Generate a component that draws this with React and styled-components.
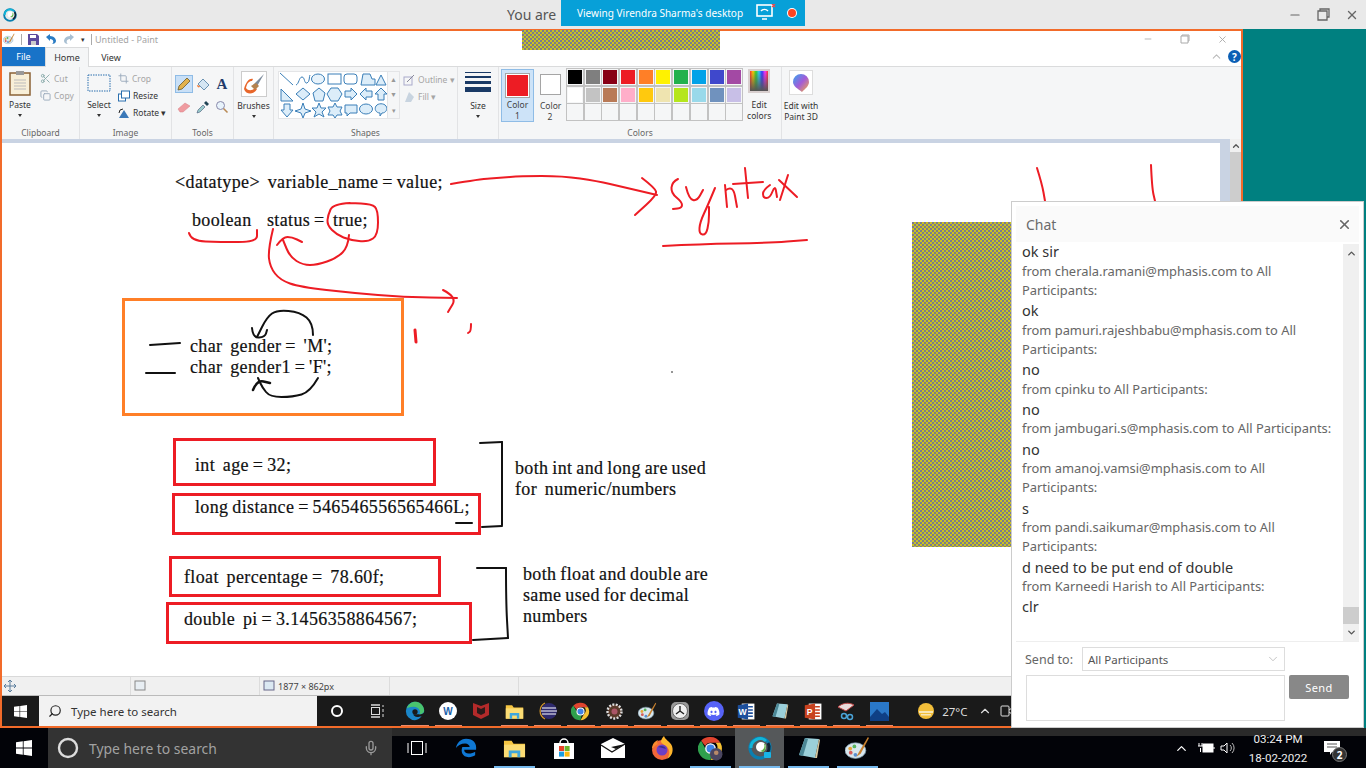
import React from "react";
import styled, { createGlobalStyle } from "styled-components";
import { Scissors, Copy, Crop, Search, Mic, X, ChevronUp, ChevronDown, Minus } from "lucide-react";
import { FaDiscord } from "react-icons/fa";

const GlobalStyle = createGlobalStyle`
  html, body { margin: 0; padding: 0; background: #fff; }
  * { box-sizing: border-box; }
`;

const UI_FONT = `"Noto Sans", "Open Sans", sans-serif`;
const HATCH = `repeating-conic-gradient(#c8c220 0 25%, #7b7b8c 0 50%) 0 0 / 4px 4px`;

const Screen = styled.div`
  position: relative;
  width: 1366px;
  height: 768px;
  overflow: hidden;
  display: flex;
  flex-direction: column;
  font-family: ${UI_FONT};
`;

/* ---------- meeting client top bar ---------- */
const TopBar = styled.div`
  height: 29px;
  background: #e9e9e9;
  display: flex;
  align-items: center;
  padding-left: 3px;
  flex: none;
`;
const YouAre = styled.span`
  margin-left: 490px;
  font-size: 14px;
  color: #555;
`;
const ClientControls = styled.div`
  margin-left: auto;
  display: flex;
  align-items: center;
  gap: 15px;
  padding-right: 7px;
  color: #666;
`;
const SharePill = styled.div`
  position: absolute;
  left: 561px;
  top: 0;
  width: 244px;
  height: 26px;
  background: #07a0d8;
  color: #fff;
  font-size: 10.05px;
  white-space: nowrap;
  display: flex;
  align-items: center;
  padding-left: 16px;
  z-index: 5;
`;
const RecDot = styled.i`
  width: 8px;
  height: 8px;
  border-radius: 50%;
  background: #ff4422;
  box-shadow: 0 0 0 1px #fff;
  margin-left: 12px;
  flex: none;
`;
const TopHatch = styled.div`
  position: absolute;
  left: 522px;
  top: 30px;
  width: 198px;
  height: 20px;
  z-index: 4;
  background: ${HATCH};
`;

/* ---------- remote desktop ---------- */
const Middle = styled.div`
  display: flex;
  height: 699px;
  flex: none;
  background: #008080;
`;
const PaintWindow = styled.div`
  width: 1243px;
  height: 699px;
  border: 2px solid #f26b2a;
  display: flex;
  flex-direction: column;
  background: #fff;
`;
const TitleRow = styled.div`
  height: 16px;
  display: flex;
  align-items: center;
  flex: none;
  padding-left: 1px;
  gap: 6px;
`;
const QatSep = styled.i`
  width: 1px;
  height: 11px;
  background: #aaa;
`;
const DocTitle = styled.span`
  font-size: 9px;
  color: #a4a4a4;
  margin-left: -3px;
`;
const WinControls = styled.div`
  margin-left: auto;
  display: flex;
  align-items: center;
  gap: 27px;
  padding-right: 13px;
  color: #aaa;
`;
const TabRow = styled.div`
  height: 20px;
  display: flex;
  flex: none;
  border-bottom: 1px solid #dadbdc;
  position: relative;
`;
const FileTab = styled.div`
  width: 43px;
  background: #1873c8;
  color: #fff;
  font-size: 9px;
  display: flex;
  align-items: center;
  justify-content: center;
`;
const RibbonTab = styled.div`
  width: 44px;
  font-size: 9px;
  color: #333;
  display: flex;
  align-items: center;
  justify-content: center;
  height: ${(p) => (p.$active ? "20px" : "19px")};
  background: ${(p) => (p.$active ? "#f5f6f7" : "#fff")};
  border: 1px solid ${(p) => (p.$active ? "#dadbdc" : "transparent")};
  border-bottom: none;
  z-index: 1;
`;
const TabEnd = styled.div`
  margin-left: auto;
  display: flex;
  align-items: center;
  gap: 5px;
  color: #bbb;
`;
const HelpDot = styled.span`
  width: 13px;
  height: 13px;
  border-radius: 50%;
  background: #0b5fb5;
  color: #fff;
  font-size: 10px;
  font-weight: 700;
  display: flex;
  align-items: center;
  justify-content: center;
`;

const Ribbon = styled.div`
  height: 72px;
  flex: none;
  display: flex;
  background: #f5f6f7;
`;
const Group = styled.div`
  width: ${(p) => p.$w}px;
  display: flex;
  flex-direction: column;
  border-right: 1px solid #e2e3e5;
  ${(p) => p.$none && "border-right: none;"}
`;
const GroupBody = styled.div`
  flex: 1;
  display: flex;
  gap: ${(p) => p.$gap || 0}px;
  padding: ${(p) => p.$pad || "3px 0 0 0"};
`;
const GroupLabel = styled.div`
  height: 13px;
  font-size: 8.5px;
  line-height: 13px;
  text-align: center;
  color: #666;
`;
const BigTool = styled.div`
  width: ${(p) => p.$w}px;
  display: flex;
  flex-direction: column;
  align-items: center;
  font-size: 8.5px;
  line-height: 11px;
  color: #333;
  text-align: center;
  white-space: nowrap;
  flex: none;
`;
const Caret = styled.i`
  display: block;
  width: 0;
  height: 0;
  margin: 4px auto 0;
  border: 2.5px solid transparent;
  border-top: 3px solid #333;
  border-bottom: none;
`;
const SmallTools = styled.div`
  display: flex;
  flex-direction: column;
  margin-left: ${(p) => p.$ml || 0}px;
`;
const SmallTool = styled.div`
  height: 17px;
  display: flex;
  align-items: center;
  gap: 3px;
  font-size: 8.5px;
  color: ${(p) => (p.$off ? "#a5a5a5" : "#333")};
`;
const ToolGrid = styled.div`
  display: grid;
  grid-template-columns: repeat(3, 18px);
  grid-auto-rows: 18px;
  gap: 5px 1px;
  margin-left: 3px;
  margin-top: 8px;
`;
const Spacer = styled.div`
  flex: 1;
`;
const ToolCell = styled.div`
  display: flex;
  align-items: center;
  justify-content: center;
  background: ${(p) => (p.$active ? "#c9e0f7" : "transparent")};
  outline: ${(p) => (p.$active ? "1px solid #8fbce6" : "none")};
  outline-offset: -1px;
`;
const ToolLetter = styled.span`
  font-family: "Liberation Serif", serif;
  font-weight: 700;
  font-size: 15px;
  color: #223a6a;
`;
const Gallery = styled.div`
  width: 110px;
  height: 48px;
  background: #fff;
  border: 1px solid #e4e5e7;
  flex: none;
`;
const GalleryArrows = styled.div`
  width: 12px;
  height: 48px;
  border: 1px solid #e4e5e7;
  border-left: none;
  display: flex;
  flex-direction: column;
  justify-content: space-around;
  align-items: center;
  color: #999;
  font-size: 7px;
  line-height: 1;
  flex: none;
`;
const SizeLines = styled.div`
  width: 26px;
  display: flex;
  flex-direction: column;
  gap: 3px;
  margin: 2px 0 8px;
`;
const SizeLine = styled.i`
  display: block;
  height: ${(p) => p.$h}px;
  background: #1a3a66;
`;
const ColorPick = styled.div`
  width: ${(p) => (p.$active ? 33 : 22)}px;
  height: 53px;
  padding-top: ${(p) => (p.$active ? 4 : 5)}px;
  background: ${(p) => (p.$active ? "#cde3f8" : "transparent")};
  border: 1px solid ${(p) => (p.$active ? "#8fbce6" : "transparent")};
  font-size: 8.5px;
  line-height: 11px;
  color: #444;
  text-align: center;
  flex: none;
`;
const ColorChip = styled.div`
  width: ${(p) => p.$s}px;
  height: ${(p) => p.$s}px;
  margin: 0 auto ${(p) => p.$mb}px;
  background: ${(p) => p.$c};
  border: 1px solid #fff;
  outline: 1px solid #a5a5a5;
`;
const Palette = styled.div`
  display: grid;
  grid-template-columns: repeat(10, 16px);
  grid-auto-rows: 16px;
  gap: 1.5px 1.7px;
  margin: 0 -2px 0 1px;
  flex: none;
`;
const Swatch = styled.div`
  background: ${(p) => p.$c};
  border: 1px solid #f5f6f7;
  outline: 1px solid #c2c2c2;
  outline-offset: 0;
`;
const Rainbow = styled.div`
  width: 22px;
  height: 24px;
  margin-bottom: 6px;
  border: 2px solid #d8cfcf;
  background: linear-gradient(#0000, #555), linear-gradient(90deg, #f33, #fc0, #3c3, #3cf, #33f, #f3f, #f33);
`;
const Ball3d = styled.div`
  width: 24px;
  height: 25px;
  margin-bottom: 5px;
  background: #fff;
  border: 1px solid #ddd;
  display: flex;
  align-items: center;
  justify-content: center;
`;

/* canvas */
const CanvasRow = styled.div`
  flex: 1;
  display: flex;
  min-height: 0;
  background: #c9d3e3;
`;
const CanvasWrap = styled.div`
  flex: 1;
  padding: 4px 10px 0 0;
  min-width: 0;
`;
const Canvas = styled.div`
  position: relative;
  height: 100%;
  background: #fff;
  font-family: "Liberation Serif", serif;
  color: #111;
`;
const VScroll = styled.div`
  width: 11px;
  background: #cdcdcd;
  display: flex;
  flex-direction: column;
`;
const VArrow = styled.div`
  height: 13px;
  background: #f0f0f0;
  color: #555;
  display: flex;
  align-items: center;
  justify-content: center;
`;
const Ink = styled.svg`
  position: absolute;
  left: 0;
  top: 0;
  pointer-events: none;
`;
const CanvasText = styled.div`
  position: absolute;
  left: ${(p) => p.$x - 2}px;
  top: ${(p) => p.$y - 143}px;
  transform: translateY(-50%);
  white-space: pre;
  font-size: 18px;
  letter-spacing: 0.37px;
  word-spacing: -1px;
  -webkit-text-stroke: 0.2px #111;
`;
const Frame = styled.div`
  position: absolute;
  left: ${(p) => p.$x - 2}px;
  top: ${(p) => p.$y - 143}px;
  width: ${(p) => p.$w}px;
  height: ${(p) => p.$h}px;
  border: 3px solid ${(p) => p.$c};
`;
const Hatch = styled.div`
  position: absolute;
  left: 910px;
  top: 79px;
  width: 110px;
  height: 325px;
  background: ${HATCH};
`;

/* status bar */
const StatusBar = styled.div`
  height: 20px;
  flex: none;
  display: flex;
  background: #f0f0f0;
  border-top: 1px solid #d9d9d9;
  border-bottom: 1px solid #bbb;
`;
const StatusCell = styled.div`
  width: ${(p) => p.$w}px;
  border-right: 1px solid #dcdcdc;
  display: flex;
  align-items: center;
  gap: 3px;
  padding-left: ${(p) => p.$pl || 2}px;
  font-size: 9px;
  color: #444;
`;

/* inner taskbar */
const InnerBar = styled.div`
  height: 30px;
  flex: none;
  display: flex;
  align-items: center;
  background: #1a1a1a;
`;
const InnerStart = styled.div`
  width: 37px;
  display: flex;
  justify-content: center;
`;
const InnerSearch = styled.div`
  width: 278px;
  height: 30px;
  background: #f2f2f2;
  color: #333;
  font-size: 11.5px;
  display: flex;
  align-items: center;
  gap: 9px;
  padding-left: 9px;
`;
const FlipSearch = styled(Search)`
  transform: scaleX(-1);
`;
const InnerSlot = styled.div`
  width: ${(p) => p.$w || 33.2}px;
  margin-left: ${(p) => p.$ml || 0}px;
  height: 30px;
  flex: none;
  display: flex;
  align-items: center;
  justify-content: center;
  color: #fff;
  position: relative;
  ${(p) =>
    p.$run &&
    `&::after { content: ""; position: absolute; left: 3px; right: 3px; bottom: 0; height: 1px; background: #f08a68; }`}
`;
const DiscordGlyph = styled(FaDiscord)`
  position: absolute;
`;
const InnerTemp = styled.span`
  font-size: 11.5px;
  color: #ddd;
  margin-left: -7px;
  width: 36px;
  flex: none;
`;
const Teal = styled.div`
  flex: 1;
  background: #008080;
`;

/* outer taskbar */
const OuterBar = styled.div`
  flex: 1;
  display: flex;
  align-items: stretch;
  background: linear-gradient(#2a2a2a 8px, #020308 8px);
  color: #fff;
`;
const OuterStart = styled.div`
  width: 48px;
  background: #020308;
  display: flex;
  align-items: center;
  justify-content: center;
`;
const OuterSearch = styled.div`
  width: 344px;
  background: #333;
  display: flex;
  align-items: center;
  padding: 0 13px 0 9px;
  gap: 10px;
  font-size: 13.9px;
  color: #a2a2a2;
`;
const MicIcon = styled(Mic)`
  margin-left: auto;
`;
const OuterSlot = styled.div`
  width: 49px;
  display: flex;
  align-items: center;
  justify-content: center;
  position: relative;
  background: ${(p) => (p.$active ? "#55585a" : "transparent")};
  ${(p) =>
    p.$run &&
    `&::after { content: ""; position: absolute; left: 4px; right: 4px; bottom: 0; height: 2px; background: #76b9ed; }`}
`;
const Tray = styled.div`
  margin-left: auto;
  display: flex;
  align-items: center;
  padding-right: 5px;
`;
const TrayIcon = styled.div`
  width: 21px;
  margin-left: ${(p) => p.$ml || 0}px;
  display: flex;
  justify-content: center;
  color: #fff;
`;
const Clock = styled.div`
  width: 78px;
  margin-right: 1px;
  padding: 2px 0 0 2px;
  text-align: center;
  font-family: Roboto, sans-serif;
  font-size: 11.6px;
  line-height: 19px;
  color: #eee;
`;
const Notify = styled.div`
  position: relative;
  width: 30px;
  height: 30px;
  display: flex;
  align-items: center;
  justify-content: center;
  margin-right: 14px;
`;
const NotifyBadge = styled.span`
  position: absolute;
  right: 0;
  bottom: 1px;
  width: 15px;
  height: 15px;
  border-radius: 50%;
  background: #333;
  border: 1px solid #777;
  font-size: 10px;
  font-weight: 700;
  color: #fff;
  display: flex;
  align-items: center;
  justify-content: center;
`;

/* chat */
const ChatPanel = styled.div`
  position: absolute;
  left: 1011px;
  top: 201px;
  width: 353px;
  height: 527px;
  z-index: 6;
  background: #fff;
  border: 1px solid #ccc;
  padding: 4px;
  display: flex;
  flex-direction: column;
`;
const ChatHead = styled.div`
  height: 36px;
  flex: none;
  background: #fafafa;
  display: flex;
  align-items: center;
  justify-content: space-between;
  padding: 0 7px 0 10px;
  font-size: 14px;
  color: #6b6b6b;
`;
const ChatBody = styled.div`
  height: 400px;
  flex: none;
  display: flex;
  padding-left: 6px;
  border-bottom: 1px solid #eee;
`;
const ChatList = styled.div`
  flex: 1;
  margin-top: -0.6px;
  padding-right: 6px;
  min-width: 0;
`;
const ChatMsg = styled.div`
  font-size: 14.5px;
  line-height: 20.2px;
  color: #333;
`;
const ChatFrom = styled.div`
  font-size: 12.9px;
  line-height: 19.4px;
  color: #666;
`;
const ChatScroll = styled.div`
  width: 16px;
  flex: none;
  margin-top: 2px;
  background: #f0f0f0;
  display: flex;
  flex-direction: column;
  align-items: center;
  justify-content: space-between;
  color: #555;
  padding: 4px 0 3px;
  position: relative;
`;
const ChatThumb = styled.i`
  position: absolute;
  left: 0;
  right: 0;
  top: 363px;
  height: 17px;
  background: #cdcdcd;
`;
const SendRow = styled.div`
  display: flex;
  align-items: center;
  padding: 5px 0 0 9px;
  font-size: 12.5px;
  color: #666;
`;
const SendTo = styled.span`
  width: 57px;
`;
const SelectBox = styled.div`
  width: 203px;
  height: 24px;
  border: 1px solid #ddd;
  display: flex;
  align-items: center;
  justify-content: space-between;
  padding: 0 4px 0 5px;
  font-size: 11.5px;
  color: #555;
`;
const ComposeRow = styled.div`
  display: flex;
  align-items: flex-start;
  gap: 4px;
  padding: 4px 0 0 10px;
`;
const Compose = styled.div`
  width: 259px;
  height: 46px;
  border: 1px solid #ddd;
`;
const SendButton = styled.div`
  width: 60px;
  height: 24px;
  background: #888;
  border-radius: 2px;
  color: #fff;
  font-size: 11px;
  letter-spacing: 0.4px;
  display: flex;
  align-items: center;
  justify-content: center;
`;
const PillIcon = styled.span`
  margin-left: 13px;
  display: flex;
  align-items: center;
  flex: none;
`;
const ToolCaption = styled.span`
  margin-top: 3px;
`;
const QatCaret = styled.span`
  font-size: 7px;
  color: #333;
`;

/* ---------- small drawings ---------- */
const WinLogo = ({ s, c = "#fff" }) => (
  <svg width={s} height={s} viewBox="0 0 16 16" fill={c}>
    <path d="M0 2.3 6.8 1.3V7.6H0ZM7.6 1.2 16 0V7.6H7.6ZM0 8.4H6.8V14.7L0 13.7ZM7.6 8.4H16V16L7.6 14.8Z" />
  </svg>
);
const WebexRing = ({ s, badge }) => (
  <svg width={s} height={s} viewBox="0 0 24 24">
    <circle cx="12" cy="12" r="10" fill="none" stroke="#0a7fb0" strokeWidth="3.2" />
    <path d="M3 12a9 9 0 0 1 15-7" fill="none" stroke="#12b5d8" strokeWidth="3" />
    <path d="M20 7a9 9 0 0 1-3 12" fill="none" stroke="#123" strokeWidth="3" />
    <circle cx="13" cy="11" r="5" fill="#fff" />
    <path d="M17 8a6 6 0 0 1-2 8l-3-1a5 5 0 0 0 4-7z" fill="#5fb544" />
    {badge && <rect x="16" y="16" width="7" height="6" rx="1" fill="#19b5e6" />}
  </svg>
);
const Folder = ({ s }) => (
  <svg width={s} height={s} viewBox="0 0 24 24">
    <path d="M1 4h8l2 3h12v14H1z" fill="#f5c542" />
    <path d="M1 8h22v13H1z" fill="#fbdc74" />
    <path d="M6 14h12v7h-3v-4H9v4H6z" fill="#3fa6dc" />
  </svg>
);
const ChromeLogo = ({ s, extra }) => (
  <svg width={s} height={s} viewBox="0 0 24 24">
    <path d="M12 1a11 11 0 0 1 9.5 5.5H12a5.5 5.5 0 0 0-5 3L3 4.5A11 11 0 0 1 12 1z" fill="#e0442f" />
    <path d="M21.5 6.5A11 11 0 0 1 12 23l4.7-8.1a5.5 5.5 0 0 0 .2-8.4z" fill="#f6c232" />
    <path d="M12 23A11 11 0 0 1 3 4.5l4.7 8.6a5.5 5.5 0 0 0 5.6 3.7z" fill="#2fa04d" />
    <circle cx="12" cy="12" r="4.5" fill="#3f83e8" stroke="#fff" strokeWidth="1.3" />
    {extra && <circle cx="17.5" cy="17.5" r="6" fill="#4a4660" />}
    {extra && <circle cx="17.5" cy="16" r="2.2" fill="#b98a68" />}
  </svg>
);
const EdgeLogo = ({ s }) => (
  <svg width={s} height={s} viewBox="0 0 24 24">
    <path d="M12 1a11 11 0 0 1 11 11c0 3-3 4-6 4H10c0 2 3 4 7 3 1 0 2-.5 3-1-2 3-5 5-8 5A11 11 0 0 1 1 12 11 11 0 0 1 12 1z" fill="#1a86c9" />
    <path d="M2 9c2-5 6-8 10-8 5 0 10 3 11 10 0 3-3 5-6 5 2-2 1-6-2-8-4-2-10-1-13 1z" fill="#49c46e" />
    <circle cx="12" cy="13" r="3.2" fill="#1a1a1a" />
  </svg>
);
const OuterEdge = ({ s }) => (
  <svg width={s} height={s} viewBox="0 0 24 24">
    <path d="M12 2C6 2 2 7 1 12c2-3 6-5 10-5 3 0 5 2 5 4H8c-2 5 0 11 7 11 3 0 5-1 7-2v-4c-2 1-4 2-7 2-3 0-5-1-5-4h13c1-7-3-12-11-12z" fill="#0f78d4" />
  </svg>
);
const PaintLogo = ({ s }) => (
  <svg width={s} height={s} viewBox="0 0 24 24">
    <ellipse cx="10" cy="14" rx="10" ry="7.5" fill="#d7e6ee" stroke="#7c9aac" strokeWidth=".7" />
    <circle cx="5" cy="12" r="1.8" fill="#e7a53a" />
    <circle cx="9" cy="10" r="1.8" fill="#58b560" />
    <circle cx="5.5" cy="16" r="1.8" fill="#d65b5b" />
    <circle cx="10" cy="18" r="1.8" fill="#5a8ed0" />
    <path d="M22 1 13 16l-2 4 4-3L23 2z" fill="#c8812f" />
  </svg>
);
const NotepadLogo = ({ s }) => (
  <svg width={s} height={s} viewBox="0 0 24 24">
    <path d="M8 2 22 3 18 22 2 19z" fill="#9bd0da" />
    <path d="M8 2 2 19l4 1L11 3z" fill="#4b8796" />
    <path d="M22 3 18 22l2 0 3-18z" fill="#d9c9a0" />
  </svg>
);
const FirefoxLogo = ({ s }) => (
  <svg width={s} height={s} viewBox="0 0 24 24">
    <circle cx="12" cy="14" r="10" fill="#f3673a" />
    <path d="M14 0c1 4 6 5 8 10 2 6-1 11-5 13 3-4 3-9 0-12-2-2-5-3-6-5 0-2 1-4 3-6z" fill="#fdb52c" />
    <path d="M2 13C2 8 5 5 8 4c-1 2-1 3 0 4-3 1-4 3-6 5z" fill="#fb8a2e" />
    <circle cx="12" cy="14" r="5.5" fill="#6e3fc4" />
    <path d="M8 11c3-2 7-1 8 2-2-1-5-1-8-2z" fill="#3a2c8f" />
  </svg>
);
const OfficeDoc = ({ s, c, letter }) => (
  <svg width={s} height={s} viewBox="0 0 24 24">
    <path d="M6 2h16v20H6z" fill="#fff" />
    <path d="M14 6h6M14 10h6M14 14h6M14 18h6" stroke={c} strokeWidth="2" />
    <path d="M1 4l13-2v20L1 20z" fill={c} />
    <text x="7" y="16" fontSize="11" fontWeight="700" fill="#fff" textAnchor="middle" fontFamily="Liberation Sans, sans-serif">{letter}</text>
  </svg>
);
const Small = ({ w = 12, h = 12, vb = "0 0 12 12", children }) => (
  <svg width={w} height={h} viewBox={vb}>{children}</svg>
);

const ShapesArt = () => {
  const s = { fill: "#dcedf9", stroke: "#3b7fb8", strokeWidth: 1 };
  return (
    <svg width="108" height="46" viewBox="0 0 108 46">
      <path d="M1 1 14 13" {...s} fill="none" />
      <path d="M17 13c3-1 3-8 6-8s2 7 5 6 2-7 3-8" {...s} fill="none" />
      <ellipse cx="39" cy="7" rx="6.5" ry="5" {...s} fill="#e8f3fb" />
      <rect x="49" y="2" width="13" height="10" {...s} fill="#fff" />
      <rect x="65" y="2" width="13" height="10" rx="3" {...s} fill="#fff" />
      <path d="M82 13l2-11h7l2 5h3v6z" {...s} />
      <path d="M97 13l5-10 5 10z" {...s} />
      <path d="M2 29V17l12 12z" {...s} />
      <path d="M24 16l7 6-7 6-7-6z" {...s} />
      <path d="M40 16l6 5-2 8h-8l-2-8z" {...s} />
      <path d="M52 16h7l4 6-4 7h-7l-4-7z" {...s} />
      <path d="M66 19h6v-3l6 6-6 6v-3h-6z" {...s} />
      <path d="M93 19h-6v-3l-6 6 6 6v-3h6z" {...s} />
      <path d="M102 16l6 6h-3v6h-6v-6h-3z" {...s} />
      <path d="M5 32h6v6h3l-6 7-6-7h3z" {...s} />
      <path d="M24 31l2 6 6 2-6 2-2 5-2-5-6-2 6-2z" {...s} />
      <path d="M40 31l2 5h5l-4 4 2 5-5-3-5 3 2-5-4-4h5z" {...s} />
      <path d="M56 31l2 4h5l-2 4 2 4h-5l-2 3-2-3h-5l2-4-2-4h5z" {...s} />
      <path d="M66 33h12v8h-7l-3 3v-3h-2z" {...s} />
      <ellipse cx="87" cy="37" rx="6.5" ry="5" {...s} />
      <path d="M97 34c2-3 8-3 10 0 2 3 0 7-4 7l-2 3v-3c-4 0-6-4-4-7z" {...s} />
    </svg>
  );
};

/* ---------- data ---------- */
const toPath = (pts) => {
  let d = `M${pts[0][0]} ${pts[0][1]}`;
  for (let i = 1; i < pts.length - 1; i++) {
    const mx = (pts[i][0] + pts[i + 1][0]) / 2;
    const my = (pts[i][1] + pts[i + 1][1]) / 2;
    d += ` Q${pts[i][0]} ${pts[i][1]} ${mx} ${my}`;
  }
  const last = pts[pts.length - 1];
  return `${d} L${last[0]} ${last[1]}`;
};

const RED = "#ed1c24";
const BLACK = "#111";
const strokes = [
  { c: RED, w: 2, p: [[451, 184], [480, 179], [500, 178], [520, 176], [563, 176], [597, 181], [623, 187], [657, 195]] },
  { c: RED, w: 2, p: [[642, 178], [655, 188], [657, 195], [635, 215]] },
  { c: RED, w: 2, p: [[678, 179], [672, 182], [671, 193], [682, 202], [682, 208], [673, 209]] },
  { c: RED, w: 2, p: [[686, 187], [689, 199], [697, 201], [703, 190]] },
  { c: RED, w: 2, p: [[715, 188], [708, 205], [700, 222], [699, 234], [706, 235], [709, 222], [709, 207]] },
  { c: RED, w: 2, p: [[725, 185], [727, 207]] },
  { c: RED, w: 2, p: [[726, 190], [733, 185], [737, 207]] },
  { c: RED, w: 2, p: [[745, 168], [748, 198]] },
  { c: RED, w: 2, p: [[733, 184], [763, 182]] },
  { c: RED, w: 2, p: [[770, 185], [763, 190], [763, 198], [770, 198], [775, 185], [777, 197]] },
  { c: RED, w: 2, p: [[780, 200], [788, 175]] },
  { c: RED, w: 2, p: [[779, 180], [797, 197]] },
  { c: RED, w: 2, p: [[663, 246], [700, 244], [767, 243], [807, 240]] },
  { c: RED, w: 2, p: [[1037, 168], [1042, 184], [1045, 201]] },
  { c: RED, w: 2, p: [[1151, 165], [1152, 188], [1155, 201]] },
  { c: RED, w: 2, p: [[350, 203], [333, 204], [328, 215], [327, 225], [337, 235], [350, 240], [368, 242], [378, 235], [378, 210], [372, 204], [350, 203]] },
  { c: RED, w: 2, p: [[349, 235], [348, 247], [337, 258], [317, 265], [303, 265], [290, 257], [283, 240]] },
  { c: RED, w: 2, p: [[277, 245], [283, 237], [292, 237], [302, 242]] },
  { c: RED, w: 2, p: [[189, 233], [191, 241], [220, 242], [257, 242], [257, 230]] },
  { c: RED, w: 2, p: [[273, 229], [268, 250], [270, 267], [280, 280], [300, 287], [353, 293], [403, 297], [457, 298]] },
  { c: RED, w: 2, p: [[443, 290], [457, 297], [448, 312]] },
  { c: RED, w: 3, p: [[415, 330], [416, 342]] },
  { c: RED, w: 2, p: [[471, 324], [471, 331], [468, 333]] },
  { c: BLACK, w: 2, p: [[313, 335], [313, 323], [300, 312], [277, 310], [267, 317], [257, 337]] },
  { c: BLACK, w: 2, p: [[252, 328], [253, 338], [265, 337], [267, 330]] },
  { c: BLACK, w: 2, p: [[150, 345], [180, 343]] },
  { c: BLACK, w: 2, p: [[146, 373], [175, 373]] },
  { c: BLACK, w: 2, p: [[318, 378], [310, 392], [293, 397], [270, 397], [262, 387], [258, 378]] },
  { c: BLACK, w: 2.5, p: [[253, 390], [257, 380], [270, 383]] },
  { c: BLACK, w: 2, p: [[480, 443], [502, 442]] },
  { c: BLACK, w: 2, p: [[502, 442], [502, 525]] },
  { c: BLACK, w: 2, p: [[502, 526], [482, 527]] },
  { c: BLACK, w: 2, p: [[456, 523], [472, 523]] },
  { c: BLACK, w: 2, p: [[477, 568], [506, 568]] },
  { c: BLACK, w: 2, p: [[506, 568], [506, 602], [508, 638]] },
  { c: BLACK, w: 2, p: [[508, 638], [473, 640]] },
];

const frames = [
  { x: 122, y: 298, w: 282, h: 118, c: "#ff7f27" },
  { x: 173, y: 438, w: 263, h: 48, c: RED },
  { x: 172, y: 493, w: 309, h: 42, c: RED },
  { x: 169, y: 556, w: 272, h: 41, c: RED },
  { x: 166, y: 602, w: 306, h: 42, c: RED },
];

const labels = [
  { x: 175, y: 182, t: "<datatype>  variable_name = value;" },
  { x: 192, y: 220, t: "boolean" },
  { x: 267, y: 220, t: "status =" },
  { x: 333, y: 220, t: "true;" },
  { x: 190, y: 346, t: "char  gender =  'M';" },
  { x: 190, y: 367, t: "char  gender1 = 'F';" },
  { x: 195, y: 465, t: "int  age = 32;" },
  { x: 195, y: 507, t: "long distance = 546546556565466L;" },
  { x: 184, y: 577, t: "float  percentage =  78.60f;" },
  { x: 184, y: 619, t: "double  pi = 3.1456358864567;" },
  { x: 515, y: 468, t: "both int and long are used" },
  { x: 515, y: 489, t: "for  numeric/numbers" },
  { x: 523, y: 574, t: "both float and double are" },
  { x: 523, y: 595, t: "same used for decimal" },
  { x: 523, y: 616, t: "numbers" },
];

const swatches = [
  "#000000", "#7f7f7f", "#880015", "#ed1c24", "#ff7f27", "#fff200", "#22b14c", "#00a2e8", "#3f48cc", "#a349a4",
  "#ffffff", "#c3c3c3", "#b97a57", "#ffaec9", "#ffc90e", "#efe4b0", "#b5e61d", "#99d9ea", "#7092be", "#c8bfe7",
  "#f5f6f7", "#f5f6f7", "#f5f6f7", "#f5f6f7", "#f5f6f7", "#f5f6f7", "#f5f6f7", "#f5f6f7", "#f5f6f7", "#f5f6f7",
];

const chat = [
  { m: "ok sir", f: "from cherala.ramani@mphasis.com to All Participants:" },
  { m: "ok", f: "from pamuri.rajeshbabu@mphasis.com to All Participants:" },
  { m: "no", f: "from cpinku to All Participants:" },
  { m: "no", f: "from jambugari.s@mphasis.com to All Participants:" },
  { m: "no", f: "from amanoj.vamsi@mphasis.com to All Participants:" },
  { m: "s", f: "from pandi.saikumar@mphasis.com to All Participants:" },
  { m: "d need to be put end of double", f: "from Karneedi Harish to All Participants:" },
  { m: "clr" },
];

const Ribbons = () => (
  <Ribbon>
    <Group $w={78}>
      <GroupBody $pad="3px 0 0 6px" $gap={8}>
        <BigTool $w={24}>
          <Small w={24} h={26} vb="0 0 24 26">
            <rect x="2" y="3" width="20" height="22" fill="#f8efd8" stroke="#8a6236" strokeWidth="1.5" />
            <path d="M6 10h12M6 13h12M6 16h12M6 19h12" stroke="#bbb" />
            <rect x="8" y="1" width="8" height="4" fill="#999" />
          </Small>
          <ToolCaption>Paste</ToolCaption>
          <Caret />
        </BigTool>
        <SmallTools>
          <SmallTool $off><Scissors size={11} color="#8aa" />Cut</SmallTool>
          <SmallTool $off><Copy size={11} color="#9ab" />Copy</SmallTool>
        </SmallTools>
      </GroupBody>
      <GroupLabel>Clipboard</GroupLabel>
    </Group>
    <Group $w={92}>
      <GroupBody $pad="3px 0 0 7px" $gap={7}>
        <BigTool $w={24}>
          <Small w={24} h={26} vb="0 0 24 26">
            <rect x="1" y="5" width="22" height="16" fill="none" stroke="#2a6fae" strokeDasharray="1.5 1" />
          </Small>
          <ToolCaption>Select</ToolCaption>
          <Caret />
        </BigTool>
        <SmallTools>
          <SmallTool $off><Crop size={11} color="#9ab" />Crop</SmallTool>
          <SmallTool>
            <Small><rect x="0.5" y="4" width="7" height="7" fill="#fff" stroke="#2a6fae" /><rect x="3.5" y="1" width="8" height="7" fill="#fff" stroke="#2a6fae" /></Small>
            Resize
          </SmallTool>
          <SmallTool>
            <Small><path d="M1 11h10L6 3z" fill="#3a78b8" /><path d="M1 6a4 4 0 0 1 4-4" stroke="#222" fill="none" /></Small>
            Rotate ▾
          </SmallTool>
        </SmallTools>
      </GroupBody>
      <GroupLabel>Image</GroupLabel>
    </Group>
    <Group $w={62}>
      <ToolGrid>
        <ToolCell $active>
          <Small w={14} h={14} vb="0 0 14 14"><path d="M1 13l1-4 8-8 3 3-8 8z" fill="#e2b24c" stroke="#6b5a2a" strokeWidth=".8" /></Small>
        </ToolCell>
        <ToolCell>
          <Small w={14} h={14} vb="0 0 14 14"><path d="M7 2l6 6-5 5-6-6z" fill="#d5e6f3" stroke="#6b93b3" /><path d="M1 8c0 3 3 3 3 1z" fill="#f08040" /></Small>
        </ToolCell>
        <ToolCell><ToolLetter>A</ToolLetter></ToolCell>
        <ToolCell>
          <Small w={14} h={14} vb="0 0 14 14"><path d="M1 9l7-6 5 3-7 6H3z" fill="#ef9ba0" stroke="#d98086" strokeWidth=".5" /></Small>
        </ToolCell>
        <ToolCell>
          <Small w={14} h={14} vb="0 0 14 14"><path d="M1 13l1-3 5-5 2 2-5 5z" fill="#9cc" stroke="#457" strokeWidth=".6" /><path d="M8 3l2-2 3 3-2 2z" fill="#245" /></Small>
        </ToolCell>
        <ToolCell>
          <Small w={14} h={14} vb="0 0 14 14"><circle cx="5.5" cy="5.5" r="4" fill="#e8f3fb" stroke="#88a" /><path d="M8.5 8.5l4 4" stroke="#b88a55" strokeWidth="1.6" /></Small>
        </ToolCell>
      </ToolGrid>
      <Spacer />
      <GroupLabel>Tools</GroupLabel>
    </Group>
    <Group $w={40}>
      <GroupBody $pad="4px 0 0 0">
        <BigTool $w={39}>
          <Small w={26} h={26} vb="0 0 26 26">
            <rect x="0.5" y="0.5" width="25" height="25" fill="#fff" stroke="#ccc" />
            <path d="M23 3 12 14l3 3z" fill="#7c8b9c" />
            <path d="M3 18c2-8 6-11 9-10l-1 2c-3 0-5 2-6 7 2 3 6 3 9 0l2 1c-3 6-11 6-13 0z" fill="#e8662a" />
            <path d="M10 15l5-3 3 3-4 4z" fill="#b5834f" />
          </Small>
          <ToolCaption>Brushes</ToolCaption>
          <Caret />
        </BigTool>
      </GroupBody>
      <GroupLabel>&nbsp;</GroupLabel>
    </Group>
    <Group $w={184}>
      <GroupBody $pad="4px 0 0 4px">
        <Gallery><ShapesArt /></Gallery>
        <GalleryArrows><span>▲</span><span>▼</span><span>▾</span></GalleryArrows>
        <SmallTools $ml={3}>
          <SmallTool $off><Small><rect x="1" y="3" width="8" height="8" fill="none" stroke="#aac" /><path d="M4 8l7-7" stroke="#889" /></Small>Outline ▾</SmallTool>
          <SmallTool $off><Small><path d="M6 1l5 5-3 5H2z" fill="#c8d4e0" /></Small>Fill ▾</SmallTool>
        </SmallTools>
      </GroupBody>
      <GroupLabel>Shapes</GroupLabel>
    </Group>
    <Group $w={41}>
      <GroupBody $pad="3px 0 0 7px">
        <BigTool $w={26}>
          <SizeLines>
            <SizeLine $h={1} /><SizeLine $h={2} /><SizeLine $h={3} /><SizeLine $h={5} />
          </SizeLines>
          <span>Size</span>
          <Caret />
        </BigTool>
      </GroupBody>
      <GroupLabel>&nbsp;</GroupLabel>
    </Group>
    <Group $w={283}>
      <GroupBody $pad="2px 0 0 2px" $gap={5}>
        <ColorPick $active>
          <ColorChip $c="#ed1c24" $s={23} $mb={2} />
          Color<br />1
        </ColorPick>
        <ColorPick>
          <ColorChip $c="#fff" $s={19} $mb={6} />
          Color<br />2
        </ColorPick>
        <Palette>
          {swatches.map((c, i) => <Swatch key={i} $c={c} />)}
        </Palette>
        <BigTool $w={28}>
          <Rainbow />
          Edit<br />colors
        </BigTool>
      </GroupBody>
      <GroupLabel>Colors</GroupLabel>
    </Group>
    <Group $w={41} $none>
      <GroupBody>
        <BigTool $w={38}>
          <Ball3d>
            <Small w={18} h={20} vb="0 0 18 20">
              <defs>
                <linearGradient id="ball" x1="0" y1="0" x2="1" y2="1">
                  <stop offset="0" stopColor="#34a7ef" /><stop offset=".5" stopColor="#a35bd8" /><stop offset="1" stopColor="#f7b23b" />
                </linearGradient>
              </defs>
              <path d="M9 1a8 8 0 0 1 8 8c0 4-4 7-7 10-4-3-9-6-9-10a8 8 0 0 1 8-8z" fill="url(#ball)" />
            </Small>
          </Ball3d>
          Edit with<br />Paint 3D
        </BigTool>
      </GroupBody>
      <GroupLabel>&nbsp;</GroupLabel>
    </Group>
  </Ribbon>
);

const App = () => (
  <Screen>
    <GlobalStyle />
    <TopBar>
      <WebexRing s={14} />
      <YouAre>You are</YouAre>
      <ClientControls>
        <Minus size={14} strokeWidth={2} />
        <Small w={13} h={13} vb="0 0 13 13">
          <path d="M3 3V1h9v8h-2M1 3h9v9H1z" fill="none" stroke="#666" strokeWidth="1.3" />
        </Small>
        <X size={14} strokeWidth={2.4} />
      </ClientControls>
    </TopBar>
    <SharePill>
      Viewing Virendra Sharma's desktop
      <PillIcon>
        <Small w={20} h={18} vb="0 0 20 18">
          <rect x="1" y="1" width="15" height="11" fill="none" stroke="#fff" strokeWidth="1.6" />
          <path d="M5 7c2-2 5-2 7 0M6 15h5" stroke="#fff" strokeWidth="1.5" fill="none" />
          <path d="M16 0l3 3M19 0l-3 3" stroke="#f44" strokeWidth="1.3" />
        </Small>
      </PillIcon>
      <RecDot />
    </SharePill>
    <TopHatch />

    <Middle>
      <PaintWindow>
        <TitleRow>
          <PaintLogo s={12} />
          <QatSep />
          <Small w={11} h={11} vb="0 0 11 11">
            <path d="M0 0h9l2 2v9H0z" fill="#5d4a9e" /><rect x="2" y="1" width="6" height="3" fill="#fff" /><rect x="3" y="7" width="5" height="4" fill="#ccc" />
          </Small>
          <Small vb="0 0 12 12"><path d="M1 4l4-3v2c4 0 6 3 6 5s-2 3-4 3c2-1 2-5-2-5v2z" fill="#2a7cc4" /></Small>
          <Small vb="0 0 12 12"><path d="M11 4L7 1v2C3 3 1 6 1 8s2 3 4 3C3 10 3 6 7 6v2z" fill="#a8bfd2" /></Small>
          <QatCaret>▾</QatCaret>
          <QatSep />
          <DocTitle>Untitled - Paint</DocTitle>
          <WinControls>
            <Minus size={10} />
            <Small w={10} h={10} vb="0 0 10 10"><path d="M2 2V1h7v6H8M1 2h7v7H1z" fill="none" stroke="#aaa" /></Small>
            <X size={11} />
          </WinControls>
        </TitleRow>
        <TabRow>
          <FileTab>File</FileTab>
          <RibbonTab $active>Home</RibbonTab>
          <RibbonTab>View</RibbonTab>
          <TabEnd>
            <ChevronUp size={13} />
            <HelpDot>?</HelpDot>
          </TabEnd>
        </TabRow>
        <Ribbons />
        <CanvasRow>
          <CanvasWrap>
            <Canvas>
              <Hatch />
              {frames.map((f, i) => (
                <Frame key={i} $x={f.x} $y={f.y} $w={f.w} $h={f.h} $c={f.c} />
              ))}
              {labels.map((l, i) => (
                <CanvasText key={i} $x={l.x} $y={l.y}>{l.t}</CanvasText>
              ))}
              <Ink width="1218" height="532" viewBox="2 143 1218 532">
                {strokes.map((s, i) => (
                  <path key={i} d={toPath(s.p)} fill="none" stroke={s.c} strokeWidth={s.w} strokeLinecap="round" strokeLinejoin="round" />
                ))}
                <circle cx="672" cy="372" r=".8" fill="#111" />
              </Ink>
            </Canvas>
          </CanvasWrap>
          <VScroll>
            <VArrow><ChevronUp size={10} strokeWidth={3} /></VArrow>
          </VScroll>
        </CanvasRow>
        <StatusBar>
          <StatusCell $w={129}>
            <Small vb="0 0 12 12"><path d="M6 0v12M0 6h12M6 0 4 2M6 0l2 2M6 12l-2-2M6 12l2-2M0 6l2-2M0 6l2 2M12 6l-2-2M12 6l-2 2" stroke="#5a7d9c" fill="none" /></Small>
          </StatusCell>
          <StatusCell $w={129} $pl={3}>
            <Small><rect x="1" y="1" width="10" height="9" fill="#e8eef3" stroke="#888" /></Small>
          </StatusCell>
          <StatusCell $w={130} $pl={3}>
            <Small><rect x="1" y="1" width="10" height="9" fill="#dbe8f2" stroke="#668" /></Small>
            1877 × 862px
          </StatusCell>
          <StatusCell $w={129} />
        </StatusBar>
        <InnerBar>
          <InnerStart><WinLogo s={13} /></InnerStart>
          <InnerSearch><FlipSearch size={14} color="#222" />Type here to search</InnerSearch>
          <InnerSlot $w={40}>
            <Small w={14} h={14} vb="0 0 14 14"><circle cx="7" cy="7" r="5" fill="none" stroke="#fff" strokeWidth="2" /></Small>
          </InnerSlot>
          <InnerSlot $w={39}>
            <Small w={14} h={14} vb="0 0 14 14"><path d="M1 1h9M1 13h9" stroke="#ddd" strokeWidth="1.4" /><rect x="1.5" y="3.5" width="8" height="7" fill="none" stroke="#ddd" /><path d="M13 1v2M13 5v3M13 10v3" stroke="#ddd" /></Small>
          </InnerSlot>
          <InnerSlot $run $ml={2.4}><EdgeLogo s={20} /></InnerSlot>
          <InnerSlot $run>
            <Small w={18} h={18} vb="0 0 18 18"><circle cx="9" cy="9" r="9" fill="#fff" /><text x="9" y="13" fontSize="10" fontWeight="700" fill="#1a5fa8" textAnchor="middle" fontFamily="Liberation Sans, sans-serif">W</text></Small>
          </InnerSlot>
          <InnerSlot>
            <Small w={18} h={18} vb="0 0 18 18"><path d="M1 1l8 3 8-3v12l-8 4-8-4z" fill="#b32a2a" /><path d="M5 5v6l4 2 4-2V5l-4 2z" fill="#2a1a1a" /></Small>
          </InnerSlot>
          <InnerSlot $run><Folder s={19} /></InnerSlot>
          <InnerSlot $run>
            <Small w={20} h={20} vb="0 0 20 20"><circle cx="11" cy="10" r="8" fill="#2e2a6e" /><path d="M4 7h14M3 10h16M4 13h14" stroke="#fff" /><path d="M7 2a9 9 0 0 0 0 16" fill="none" stroke="#d99a2b" strokeWidth="1.2" /></Small>
          </InnerSlot>
          <InnerSlot $run><ChromeLogo s={19} /></InnerSlot>
          <InnerSlot $run>
            <Small w={19} h={19} vb="0 0 19 19"><circle cx="9.5" cy="9.5" r="7" fill="#5a3a2a" stroke="#ddd" strokeWidth="2.4" strokeDasharray="2 1.4" /><circle cx="9.5" cy="9.5" r="3" fill="#a56" /></Small>
          </InnerSlot>
          <InnerSlot $run><PaintLogo s={19} /></InnerSlot>
          <InnerSlot $run>
            <Small w={20} h={20} vb="0 0 20 20"><rect x="1" y="1" width="18" height="18" rx="5" fill="#999" /><circle cx="10" cy="10" r="7.5" fill="#eee" stroke="#666" /><path d="M10 10V5M10 10l-4 3M10 10l4 3" stroke="#222" strokeWidth="1.4" /></Small>
          </InnerSlot>
          <InnerSlot $run>
            <Small w={20} h={20} vb="0 0 20 20"><circle cx="10" cy="10" r="10" fill="#5662f6" /></Small>
            <DiscordGlyph size={13} color="#fff" />
          </InnerSlot>
          <InnerSlot $run><OfficeDoc s={19} c="#1d4f9c" letter="W" /></InnerSlot>
          <InnerSlot $run><NotepadLogo s={18} /></InnerSlot>
          <InnerSlot $run><OfficeDoc s={19} c="#c8421f" letter="P" /></InnerSlot>
          <InnerSlot $run>
            <Small w={20} h={20} vb="0 0 20 20"><path d="M2 6c4-4 11-5 16-2l-8 6z" fill="#e8dcdc" stroke="#b44" /><circle cx="8" cy="15" r="2.5" fill="none" stroke="#4aa3d8" strokeWidth="1.5" /><circle cx="14" cy="16" r="2.5" fill="none" stroke="#4aa3d8" strokeWidth="1.5" /></Small>
          </InnerSlot>
          <InnerSlot $run>
            <Small w={19} h={19} vb="0 0 19 19"><rect width="19" height="19" fill="#2a78c8" /><path d="M0 15l7-8 5 5 3-2 4 5v4H0z" fill="#0f3f85" /></Small>
          </InnerSlot>
          <InnerSlot $w={46} $ml={7}>
            <Small w={18} h={18} vb="0 0 18 18"><circle cx="9" cy="9" r="8" fill="#f2be3a" /><path d="M2 9h14v2H2zM4 12h10v1.5H4z" fill="#f7e6b5" /></Small>
          </InnerSlot>
          <InnerTemp>27°C</InnerTemp>
          <ChevronUp size={14} color="#ddd" />
          <InnerSlot $w={22} $ml={3}>
            <Small w={12} h={16} vb="0 0 12 16"><rect x="1" y="3" width="8" height="10" rx="1" fill="none" stroke="#ddd" /><path d="M9 7l3-2v6l-3-2" fill="none" stroke="#ddd" /></Small>
          </InnerSlot>
        </InnerBar>
      </PaintWindow>
      <Teal />
    </Middle>

    <OuterBar>
      <OuterStart><WinLogo s={16} /></OuterStart>
      <OuterSearch>
        <Small w={22} h={22} vb="0 0 22 22"><circle cx="11" cy="11" r="9" fill="none" stroke="#ddd" strokeWidth="2.4" /></Small>
        Type here to search
        <MicIcon size={16} color="#999" />
      </OuterSearch>
      <OuterSlot>
        <Small w={20} h={16} vb="0 0 20 16"><rect x="4.5" y="1.5" width="11" height="13" fill="none" stroke="#fff" /><path d="M1 3v10M19 3v10" stroke="#fff" /></Small>
      </OuterSlot>
      <OuterSlot><OuterEdge s={22} /></OuterSlot>
      <OuterSlot $run><Folder s={23} /></OuterSlot>
      <OuterSlot>
        <Small w={24} h={24} vb="0 0 24 24">
          <path d="M2 7h20v16H2z" fill="#fff" /><path d="M8 7a4 4 0 0 1 8 0" fill="none" stroke="#fff" strokeWidth="1.5" />
          <rect x="7" y="10" width="5" height="5" fill="#e8432a" /><rect x="12.6" y="10" width="5" height="5" fill="#6cb52d" />
          <rect x="7" y="15.6" width="5" height="5" fill="#1b9de2" /><rect x="12.6" y="15.6" width="5" height="5" fill="#fbb811" />
        </Small>
      </OuterSlot>
      <OuterSlot>
        <Small w={24} h={20} vb="0 0 24 20"><path d="M0 6l12-6 12 6v14H0z" fill="#fff" /><path d="M0 7l11 7 13-8" fill="none" stroke="#111" strokeWidth="1.2" /><path d="M10 9l14-3-9 5z" fill="#111" /></Small>
      </OuterSlot>
      <OuterSlot><FirefoxLogo s={24} /></OuterSlot>
      <OuterSlot $run><ChromeLogo s={25} extra /></OuterSlot>
      <OuterSlot $run $active><WebexRing s={24} badge /></OuterSlot>
      <OuterSlot $run><NotepadLogo s={24} /></OuterSlot>
      <OuterSlot $run><PaintLogo s={25} /></OuterSlot>
      <Tray>
        <TrayIcon><ChevronUp size={15} /></TrayIcon>
        <TrayIcon $ml={4}>
          <Small w={17} h={12} vb="0 0 17 12"><rect x="5" y="2" width="10" height="8" fill="#fff" stroke="#fff" /><path d="M16 5v2M1 1v3M4 1v3M0 4h5M2.5 6v4" stroke="#fff" fill="none" /></Small>
        </TrayIcon>
        <TrayIcon>
          <Small w={16} h={14} vb="0 0 16 14"><path d="M1 5h3l3-3v10l-3-3H1z" fill="none" stroke="#fff" /><path d="M10 4a4 4 0 0 1 0 6M12 2a7 7 0 0 1 0 10" fill="none" stroke="#bbb" /></Small>
        </TrayIcon>
        <Clock>03:24 PM<br />18-02-2022</Clock>
        <Notify>
          <Small w={16} h={14} vb="0 0 16 14"><path d="M0 0h16v11H8l-2 3v-3H0z" fill="#fff" /><path d="M3 3h10M3 6h10" stroke="#555" /></Small>
          <NotifyBadge>2</NotifyBadge>
        </Notify>
      </Tray>
    </OuterBar>

    <ChatPanel>
      <ChatHead>
        Chat
        <X size={15} color="#666" strokeWidth={2.6} />
      </ChatHead>
      <ChatBody>
        <ChatList>
          {chat.map((c, i) => (
            <React.Fragment key={i}>
              <ChatMsg>{c.m}</ChatMsg>
              {c.f && <ChatFrom>{c.f}</ChatFrom>}
            </React.Fragment>
          ))}
        </ChatList>
        <ChatScroll>
          <ChevronUp size={11} strokeWidth={3} />
          <ChatThumb />
          <ChevronDown size={11} strokeWidth={3} />
        </ChatScroll>
      </ChatBody>
      <SendRow>
        <SendTo>Send to:</SendTo>
        <SelectBox>All Participants<ChevronDown size={14} color="#aaa" strokeWidth={1.2} /></SelectBox>
      </SendRow>
      <ComposeRow>
        <Compose />
        <SendButton>Send</SendButton>
      </ComposeRow>
    </ChatPanel>
  </Screen>
);

export default App;
